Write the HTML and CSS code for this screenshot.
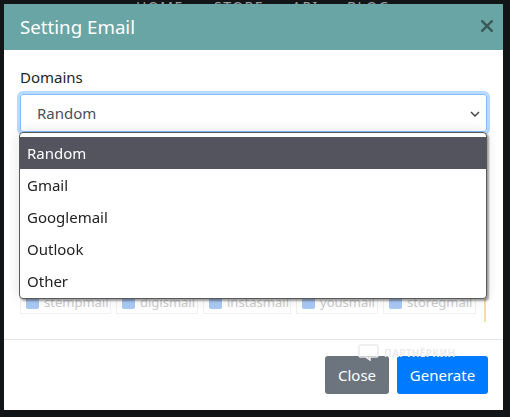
FILE: index.html
```html
<!DOCTYPE html>
<html lang="en">
<head>
<meta charset="utf-8">
<title>Setting Email</title>
<link rel="stylesheet" href="styles.css">
</head>
<body>
<div class="page">
  <nav class="topnav">
    <a>HOME</a><a>STORE</a><a>API</a><a>BLOG</a>
  </nav>
</div>

<div class="modal">
  <div class="modal-header">
    <h5 class="modal-title">Setting Email</h5>
    <button class="close" type="button" aria-label="Close">
      <svg width="12" height="12" viewBox="0 0 12 12"><path d="M1.2 1.2 L10.8 10.8 M10.8 1.2 L1.2 10.8" stroke="currentColor" stroke-width="2.4" stroke-linecap="square"/></svg>
    </button>
  </div>
  <div class="modal-body">
    <label class="label">Domains</label>
    <div class="select-wrap">
      <div class="select">
        <span>Random</span>
        <svg class="chev" width="10" height="6" viewBox="0 0 10 6"><path d="M1 1 L5 5 L9 1" fill="none" stroke="#3d3d3d" stroke-width="1.4"/></svg>
      </div>
      <ul class="popup">
        <li class="active">Random</li>
        <li>Gmail</li>
        <li>Googlemail</li>
        <li>Outlook</li>
        <li>Other</li>
      </ul>
    </div>
    <div class="services">
      <div class="checks">
        <span class="chk"><i class="box"></i>stempmail</span>
        <span class="chk"><i class="box"></i>digismail</span>
        <span class="chk"><i class="box"></i>instasmail</span>
        <span class="chk"><i class="box"></i>yousmail</span>
        <span class="chk"><i class="box"></i>storegmail</span>
      </div>
    </div>
  </div>
  <div class="modal-footer">
    <div class="watermark">
      <svg width="21" height="17" viewBox="0 0 21 17"><rect x="1" y="1" width="19" height="12" rx="1.5" fill="none" stroke="#ececec" stroke-width="1.6"/><path d="M8 13 L12 16 L12 13" fill="none" stroke="#ececec" stroke-width="1.6"/></svg>
      <span>ПАРТНЁРКИН</span>
    </div>
    <button class="btn btn-secondary" type="button">Close</button>
    <button class="btn btn-primary" type="button">Generate</button>
  </div>
</div>
</body>
</html>
```
FILE: styles.css
```css
* { box-sizing: border-box; }
html, body { margin: 0; padding: 0; }
body {
  background: #121518;
  width: 510px;
  height: 417px;
  overflow: hidden;
  font-family: "Noto Sans", "Open Sans", sans-serif;
  font-size: 15px;
  color: #212529;
}
.page { height: 417px; }
.topnav {
  display: flex;
  padding-left: 136px;
  margin-top: -3px;
  font-family: "Noto Sans", sans-serif;
  font-size: 14px;
  line-height: 20px;
  letter-spacing: 1.5px;
  color: #9a9ea3;
}
.topnav a:nth-child(1) { width: 78px; }
.topnav a:nth-child(2) { width: 78px; }
.topnav a:nth-child(3) { width: 55px; }

.modal {
  position: fixed;
  top: 4px;
  left: 4px;
  width: 499px;
  height: 406px;
  background: #fff;
  display: flex;
  flex-direction: column;
}
.modal-header {
  height: 46px;
  background: #69a5a4;
  display: flex;
  align-items: center;
  justify-content: space-between;
  padding: 0 10px 0 16px;
}
.modal-title {
  margin: 0;
  font-size: 18.7px;
  font-weight: 400;
  color: #fff;
  line-height: 28px;
  padding-bottom: 1px;
}
.close {
  background: none;
  border: 0;
  padding: 0;
  width: 12px;
  height: 12px;
  color: #385a58;
  display: block;
  margin-top: -2px;
}
.close svg { display: block; }

.modal-body {
  padding: 15px 16px 16px 16px;
  flex: 1;
}
.label {
  display: block;
  line-height: 24px;
  height: 24px;
  margin-bottom: 5px;
  color: #212529;
}
.select-wrap { position: relative; }
.select {
  height: 38px;
  border: 1px solid #80bdff;
  border-radius: 3px;
  box-shadow: 0 0 0 3px rgba(0, 123, 255, .28);
  display: flex;
  align-items: center;
  justify-content: space-between;
  padding: 0 6px 0 16px;
  color: #495057;
}
.chev { display: block; margin-top: 1px; }
.popup {
  position: absolute;
  z-index: 5;
  top: 38px;
  left: -1px;
  width: 468px;
  margin: 0;
  padding: 4px 0 1px 0;
  list-style: none;
  background: #fff;
  border: 1px solid #5a5a5a;
  border-radius: 4px;
  box-shadow: 2px 2px 2px rgba(0, 0, 0, .35), 0 0 14px rgba(0, 0, 0, .12);
}
.popup li {
  height: 32px;
  line-height: 32px;
  padding-left: 7px;
  color: #222;
}
.popup li.active {
  background: #54545f;
  color: #fff;
}
.services {
  margin-top: 158px;
  margin-right: 1px;
  border-right: 2px solid #f5dfa6;
  padding-bottom: 8px;
}
.checks {
  display: flex;
  gap: 5px;
}
.chk {
  flex: none;
  display: flex;
  align-items: center;
  height: 24px;
  padding: 0 2px 0 5px;
  border: 1px solid #f1f1f1;
  color: #cdcdcd;
  font-size: 13px;
  white-space: nowrap;
  overflow: hidden;
}
.chk:nth-child(1) { width: 91px; }
.chk:nth-child(2) { width: 82px; }
.chk:nth-child(3) { width: 88px; }
.chk:nth-child(4) { width: 82px; }
.chk:nth-child(5) { width: 93px; }
.box {
  flex: none;
  display: inline-block;
  width: 13px;
  height: 13px;
  border-radius: 2px;
  background: #a9c9f4;
  margin-right: 5px;
}

.modal-footer {
  position: relative;
  border-top: 1px solid #e3e6e9;
  display: flex;
  justify-content: flex-end;
  align-items: center;
  gap: 8px;
  padding: 16px 15px 16px 16px;
}
.watermark {
  position: absolute;
  left: 354px;
  top: 4px;
  display: flex;
  align-items: center;
  gap: 5px;
  color: #ececec;
  font-size: 10px;
  font-weight: 700;
  letter-spacing: .3px;
}
.watermark svg { display: block; }
.btn {
  height: 38px;
  border: 0;
  border-radius: 3px;
  color: #fff;
  font-family: inherit;
  font-size: 15px;
  padding: 0 12px;
  line-height: 38px;
}
.btn-secondary { background: #6c757d; width: 64px; }
.btn-primary { background: #007bff; width: 91px; }
```
